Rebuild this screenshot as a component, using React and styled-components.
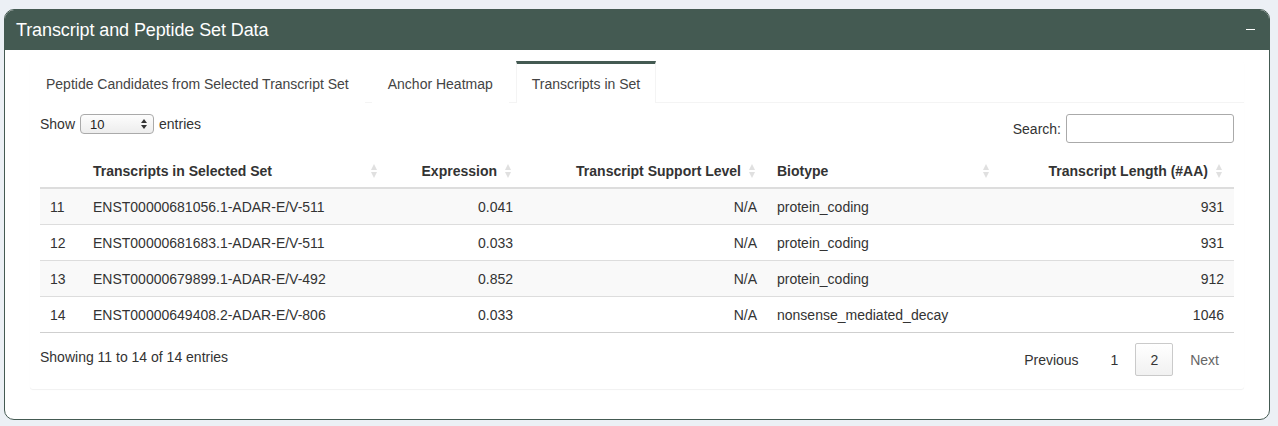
import React from "react";
import styled, { createGlobalStyle } from "styled-components";

const GlobalStyle = createGlobalStyle`
  html, body { margin: 0; padding: 0; background: #ecf0f5; }
  body {
    font-family: "Liberation Sans", Arial, Helvetica, sans-serif;
    font-size: 14px;
    color: #333;
  }
`;

const GREEN = "#445a52";

const rows = [
  { n: 11, id: "ENST00000681056.1-ADAR-E/V-511", expr: "0.041", tsl: "N/A", bio: "protein_coding", len: 931 },
  { n: 12, id: "ENST00000681683.1-ADAR-E/V-511", expr: "0.033", tsl: "N/A", bio: "protein_coding", len: 931 },
  { n: 13, id: "ENST00000679899.1-ADAR-E/V-492", expr: "0.852", tsl: "N/A", bio: "protein_coding", len: 912 },
  { n: 14, id: "ENST00000649408.2-ADAR-E/V-806", expr: "0.033", tsl: "N/A", bio: "nonsense_mediated_decay", len: 1046 },
];

const columns = [
  { label: "", width: 43, align: "left", sort: false },
  { label: "Transcripts in Selected Set", width: 302, align: "left", sort: true },
  { label: "Expression", width: 138, align: "right", sort: true },
  { label: "Transcript Support Level", width: 244, align: "right", sort: true },
  { label: "Biotype", width: 230, align: "left", sort: true },
  { label: "Transcript Length (#AA)", width: 237, align: "right", sort: true },
];

const Page = styled.div`
  padding: 9px 8px 7px 4px;
`;

const Box = styled.div`
  border: 1px solid ${GREEN};
  border-radius: 10px;
  background: #fff;
  overflow: hidden;
`;

const BoxHeader = styled.div`
  background: ${GREEN};
  color: #fff;
  height: 40px;
  display: flex;
  align-items: center;
  justify-content: space-between;
  padding: 0 14px 0 11px;
`;

const BoxTitle = styled.h3`
  margin: 0;
  font-size: 18px;
  font-weight: normal;
  letter-spacing: -0.1px;
`;

const Collapse = styled.span`
  display: block;
  width: 9px;
  height: 1px;
  background: #fff;
  margin-top: -2px;
`;

const BoxBody = styled.div`
  padding: 11px 25px 30px 25px;
`;

const TabsCard = styled.div`
  box-shadow: 0 1px 1px rgba(0, 0, 0, 0.06);
  border-radius: 3px;
  background: #fff;
`;

const TabBar = styled.ul`
  list-style: none;
  margin: 0;
  padding: 0;
  display: flex;
  border-bottom: 1px solid #f4f4f4;
`;

const Tab = styled.li`
  border-top: 3px solid ${(p) => (p.$active ? GREEN : "transparent")};
  border-left: 1px solid ${(p) => (p.$active ? "#f4f4f4" : "transparent")};
  border-right: 1px solid ${(p) => (p.$active ? "#f4f4f4" : "transparent")};
  margin-bottom: -1px;
  background: #fff;
  padding: 10px 15px 9px 15px;
  color: #444;
  font-size: 14px;
  line-height: 20px;
  margin-right: 7px;
`;

const TabPane = styled.div`
  padding: 11px 10px 0 10px;
`;

const TopControls = styled.div`
  display: flex;
  justify-content: space-between;
  align-items: flex-start;
  height: 40px;
`;

const Label = styled.label`
  display: flex;
  align-items: center;
  gap: 5px;
  font-size: 14px;
  color: #333;
`;

const SelectBox = styled.div`
  width: 74px;
  height: 20px;
  border: 1px solid #aaa;
  border-radius: 4px;
  background: linear-gradient(#fdfdfd, #ededed);
  display: flex;
  align-items: center;
  justify-content: space-between;
  padding: 0 6px 0 9px;
  box-sizing: border-box;
  font-size: 13px;
  color: #222;
`;

const SearchInput = styled.div`
  width: 168px;
  height: 29px;
  border: 1px solid #aaa;
  border-radius: 3px;
  box-sizing: border-box;
  background: #fff;
  margin-left: 5px;
`;

const SearchLabel = styled(Label)`
  gap: 0;
`;

const Table = styled.table`
  width: 100%;
  border-collapse: collapse;
  table-layout: fixed;
  font-size: 14px;
`;

const Th = styled.th`
  position: relative;
  text-align: ${(p) => p.$align};
  font-weight: bold;
  color: #333;
  padding: ${(p) => (p.$align === "right" ? "0 26px 0 10px" : "0 18px 0 10px")};
  height: 33px;
  border-bottom: 2px solid #ddd;
  white-space: nowrap;
`;

const Td = styled.td`
  text-align: ${(p) => p.$align};
  padding: 0 10px;
  height: 35px;
  border-bottom: 1px solid #ddd;
  color: #333;
  white-space: nowrap;
`;

const Tr = styled.tr`
  background: ${(p) => (p.$odd ? "#f9f9f9" : "#fff")};
  &:last-child td { border-bottom: 1px solid #cfcfcf; }
`;

const SortIcon = styled.span`
  position: absolute;
  right: ${(p) => (p.$align === "right" ? "12px" : "8px")};
  top: 50%;
  transform: translateY(-50%);
  display: flex;
  flex-direction: column;
  gap: 2px;
`;

const Tri = styled.span`
  width: 0;
  height: 0;
  border-left: 3.5px solid transparent;
  border-right: 3.5px solid transparent;
  ${(p) => (p.$up ? "border-bottom: 6px solid #e0e0e0;" : "border-top: 6px solid #e0e0e0;")}
`;

const Footer = styled.div`
  display: flex;
  justify-content: space-between;
  align-items: flex-start;
  padding-top: 10px;
  height: 46px;
`;

const Info = styled.div`
  font-size: 14px;
  color: #333;
  padding-top: 6px;
`;

const Pager = styled.div`
  display: flex;
  align-items: center;
`;

const PageBtn = styled.span`
  display: inline-flex;
  align-items: center;
  justify-content: center;
  height: 33px;
  padding: 0 14px;
  box-sizing: border-box;
  border: 1px solid ${(p) => (p.$current ? "#cacaca" : "transparent")};
  border-radius: 2px;
  background: ${(p) => (p.$current ? "linear-gradient(#fff, #f1f1f1)" : "transparent")};
  color: ${(p) => (p.$muted ? "#666" : "#333")};
  font-size: 14px;
  margin-left: 2px;
`;

function Sort({ align }) {
  return (
    <SortIcon $align={align}>
      <Tri $up />
      <Tri />
    </SortIcon>
  );
}

export default function App() {
  return (
    <>
      <GlobalStyle />
      <Page>
        <Box>
          <BoxHeader>
            <BoxTitle>Transcript and Peptide Set Data</BoxTitle>
            <Collapse />
          </BoxHeader>
          <BoxBody>
            <TabsCard>
              <TabBar>
                <Tab>Peptide Candidates from Selected Transcript Set</Tab>
                <Tab>Anchor Heatmap</Tab>
                <Tab $active>Transcripts in Set</Tab>
              </TabBar>
              <TabPane>
                <TopControls>
                  <Label>
                    Show
                    <SelectBox>
                      10
                      <svg width="6" height="10" viewBox="0 0 6 10">
                        <path d="M3 0 L6 4 L0 4 Z M0 6 L6 6 L3 10 Z" fill="#333" />
                      </svg>
                    </SelectBox>
                    entries
                  </Label>
                  <SearchLabel>
                    Search:
                    <SearchInput />
                  </SearchLabel>
                </TopControls>
                <Table>
                  <colgroup>
                    {columns.map((c, i) => (
                      <col key={i} style={{ width: c.width }} />
                    ))}
                  </colgroup>
                  <thead>
                    <tr>
                      {columns.map((c, i) => (
                        <Th key={i} $align={c.align}>
                          {c.label}
                          {c.sort && <Sort align={c.align} />}
                        </Th>
                      ))}
                    </tr>
                  </thead>
                  <tbody>
                    {rows.map((r, i) => (
                      <Tr key={r.n} $odd={i % 2 === 0}>
                        <Td $align="left">{r.n}</Td>
                        <Td $align="left">{r.id}</Td>
                        <Td $align="right">{r.expr}</Td>
                        <Td $align="right">{r.tsl}</Td>
                        <Td $align="left">{r.bio}</Td>
                        <Td $align="right">{r.len}</Td>
                      </Tr>
                    ))}
                  </tbody>
                </Table>
                <Footer>
                  <Info>Showing 11 to 14 of 14 entries</Info>
                  <Pager>
                    <PageBtn>Previous</PageBtn>
                    <PageBtn>1</PageBtn>
                    <PageBtn $current>2</PageBtn>
                    <PageBtn $muted>Next</PageBtn>
                  </Pager>
                </Footer>
              </TabPane>
            </TabsCard>
          </BoxBody>
        </Box>
      </Page>
    </>
  );
}
